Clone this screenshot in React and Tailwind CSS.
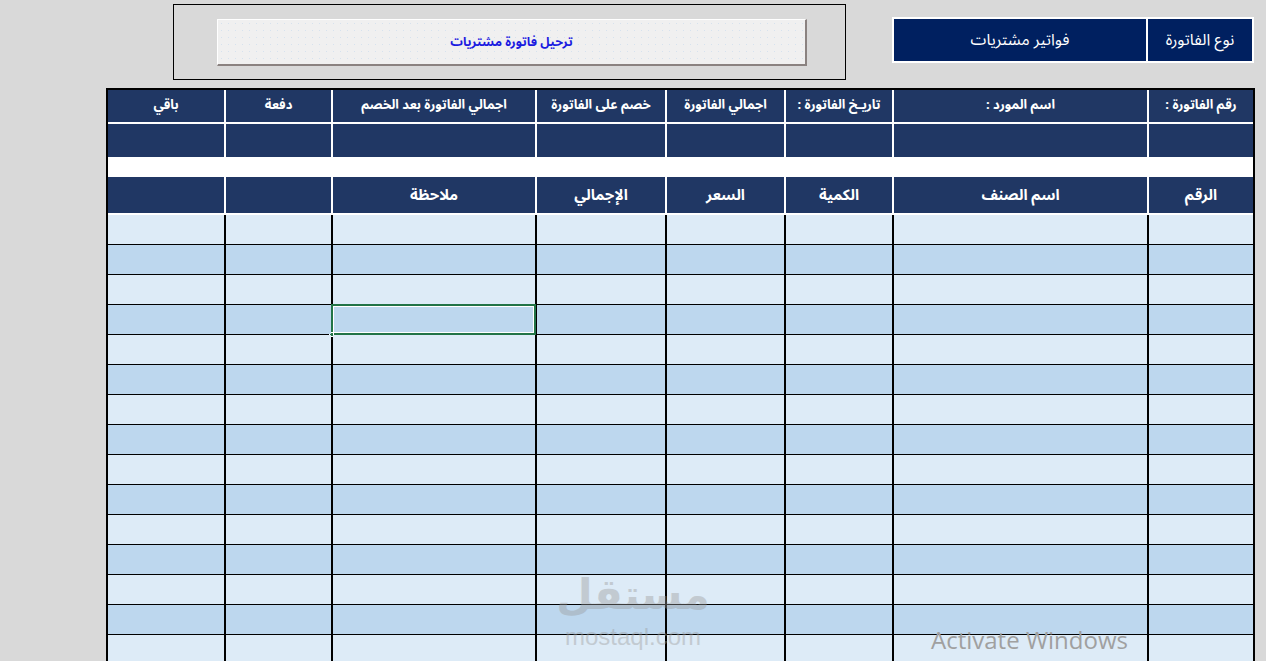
import React from "react";

const cols = "grid grid-cols-[104px_253px_106px_117px_128px_202px_105px_116px]";
const font = { fontFamily: '"Noto Sans Arabic","Noto Naskh Arabic","DejaVu Sans",sans-serif' };

const row1 = ["رقم الفاتورة :", "اسم المورد :", "تاريـخ الفاتورة :", "اجمالي الفاتورة", "خصم على الفاتورة", "اجمالي الفاتورة بعد الخصم", "دفعة", "باقي"];
const row3 = ["الرقم", "اسم الصنف", "الكمية", "السعر", "الإجمالي", "ملاحظة", "", ""];

export default function App() {
  const rows = Array.from({ length: 16 }, (_, i) => i);
  return (
    <div className="relative w-full h-[661px] overflow-hidden bg-[#d9d9d9]" style={font}>
      {/* top area */}
      <div className="flex h-[88px] items-start">
        <div className="ml-[173px] mt-[4px] w-[673px] h-[76px] border border-black flex items-start">
          <div className="ml-[43px] mt-[14px] w-[590px] h-[47px] border-t border-l border-white border-b-2 border-r-2 border-b-[#8a8280] border-r-[#8a8280] bg-[#f0f0f0] bg-[radial-gradient(#d6e2ee_0.8px,transparent_0.8px)] bg-[length:7px_7px] flex items-center justify-center">
            <span dir="rtl" className="text-[12.5px] font-bold text-[#1b1be0]">ترحيل فاتورة مشتريات</span>
          </div>
        </div>
        <div dir="rtl" className="ml-[46px] mt-[17px] w-[362px] h-[46px] border-2 border-white bg-white flex gap-[2px]">
          <div className="w-[104px] bg-[#002060] text-white text-[16px] flex items-center justify-center">نوع الفاتورة</div>
          <div className="flex-1 bg-[#002060] text-white text-[16px] flex items-center justify-center">فواتير مشتريات</div>
        </div>
      </div>

      {/* table */}
      <div dir="rtl" className="ml-[106px] w-[1149px] border-x-2 border-t-2 border-black">
        <div className="bg-white flex flex-col">
          <div className={`${cols} gap-x-[2px] h-[32px]`}>
            {row1.map((t, i) => (
              <div key={i} className="bg-[#203764] text-white text-[13px] font-bold flex items-center justify-center whitespace-nowrap">{t}</div>
            ))}
          </div>
          <div className={`${cols} gap-x-[2px] h-[33px] mt-[2px]`}>
            {row1.map((_, i) => (
              <div key={i} className="bg-[#203764]" />
            ))}
          </div>
          <div className="h-[20px] bg-white" />
          <div className={`${cols} gap-x-[2px] h-[36px]`}>
            {row3.map((t, i) => (
              <div key={i} className="bg-[#203764] text-white text-[15px] font-bold flex items-center justify-center whitespace-nowrap">{t}</div>
            ))}
          </div>
          <div className="h-[2px] bg-white" />
        </div>
        <div className="bg-black flex flex-col gap-[1px]">
          {rows.map((r) => (
            <div key={r} className={`${cols} gap-x-[2px]`}>
              {row3.map((_, c) => (
                <div key={c} className={`relative h-[29px] ${r % 2 === 0 ? "bg-[#ddebf7]" : "bg-[#bdd7ee]"}`}>
                  {r === 3 && c === 5 && (
                    <div className="absolute -top-[1px] -bottom-[1px] -left-[2px] -right-[1px] border-2 border-[#217346]">
                      <div className="absolute inset-0 border border-white" />
                      <div className="absolute -bottom-[4px] -left-[4px] w-[5px] h-[5px] bg-[#217346] border border-white" />
                    </div>
                  )}
                </div>
              ))}
            </div>
          ))}
        </div>
      </div>

      {/* watermark */}
      <div dir="rtl" className="absolute left-[553px] top-[569px] w-[160px] h-[52px] flex items-center justify-center text-[42px] font-bold leading-[52px] text-[#9a9a9a] opacity-40 pointer-events-none" style={{ fontFamily: '"DejaVu Sans",sans-serif' }}>
        مستقل
      </div>
      <div className="absolute left-[553px] top-[623px] w-[160px] h-[28px] flex items-center justify-center text-[24px] leading-[28px] text-[#9a9a9a] opacity-40 pointer-events-none" style={{ fontFamily: '"Liberation Sans",Arial,sans-serif' }}>
        mostaql.com
      </div>
      <div className="absolute left-[931px] top-[624px] text-[24px] leading-[32px] text-[#a0a0a0] pointer-events-none" style={{ fontFamily: '"Open Sans","Noto Sans",sans-serif' }}>
        Activate Windows
      </div>
    </div>
  );
}
